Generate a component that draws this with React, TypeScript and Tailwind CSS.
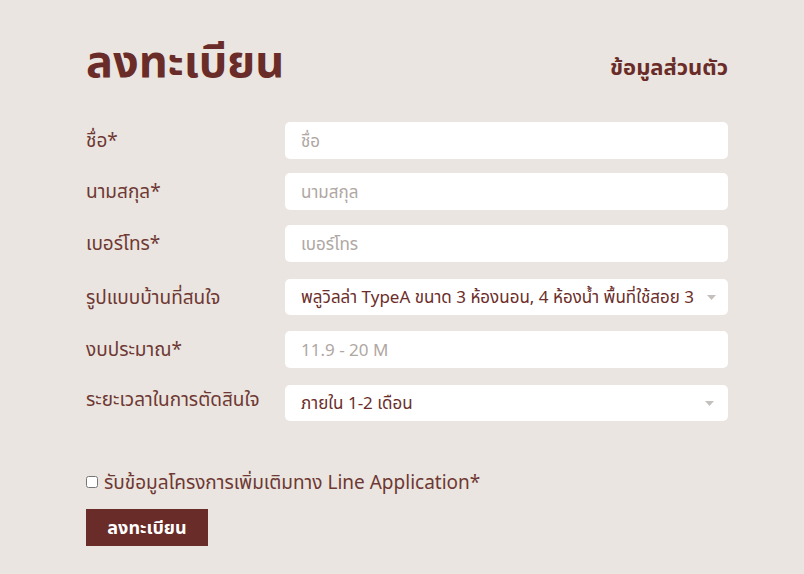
import React, { useState } from 'react';

const fields = [
  { label: 'ชื่อ*', placeholder: 'ชื่อ', mt: 'mt-0' },
  { label: 'นามสกุล*', placeholder: 'นามสกุล', mt: 'mt-[14px]' },
  { label: 'เบอร์โทร*', placeholder: 'เบอร์โทร', mt: 'mt-[15px]' },
];

const Arrow = () => (
  <svg width="9" height="5" viewBox="0 0 9 5" className="shrink-0">
    <path d="M0 0 L9 0 L4.5 5 Z" fill="#c4c0bd" />
  </svg>
);

export default function App() {
  const [agree, setAgree] = useState(false);

  return (
    <div
      className="min-h-[574px] bg-[#eae5e0] text-[#6b2e2a]"
      style={{ fontFamily: '"Noto Sans", "Noto Sans Thai", Tahoma, sans-serif' }}
    >
      <div className="w-[642px] ml-[86px] pt-[26px]">
        {/* Header */}
        <div className="flex items-end justify-between h-[56px]">
          <h1 className="text-[45px] leading-none font-bold text-[#6a2c28]">ลงทะเบียน</h1>
          <span className="text-[22px] font-bold text-[#6a2c28] -mb-[1px]">ข้อมูลส่วนตัว</span>
        </div>

        {/* Fields */}
        <div className="mt-[40px] flex flex-col">
          {fields.map(f => (
            <div key={f.label} className={`flex items-center ${f.mt}`}>
              <label className="w-[199px] text-[19px] text-[#6e3833]">{f.label}</label>
              <input
                placeholder={f.placeholder}
                className="w-[443px] h-[37px] rounded-[5px] bg-white px-[16px] text-[17px] outline-none placeholder:text-[#b0a7a3]"
              />
            </div>
          ))}

          <div className="flex items-center mt-[17px]">
            <label className="w-[199px] text-[19px] text-[#6e3833]">รูปแบบบ้านที่สนใจ</label>
            <div className="w-[443px] h-[36px] rounded-[5px] bg-white pl-[16px] pr-[12px] flex items-center overflow-hidden">
              <span className="text-[17px] text-[#6b2e2a] whitespace-nowrap overflow-hidden flex-1">
                พลูวิลล่า TypeA ขนาด 3 ห้องนอน, 4 ห้องน้ำ พื้นที่ใช้สอย 3
              </span>
              <Arrow />
            </div>
          </div>

          <div className="flex items-center mt-[16px]">
            <label className="w-[199px] text-[19px] text-[#6e3833]">งบประมาณ*</label>
            <input
              placeholder="11.9 - 20 M"
              className="w-[443px] h-[37px] rounded-[5px] bg-white px-[16px] text-[17px] outline-none placeholder:text-[#b0a7a3]"
            />
          </div>

          <div className="flex items-start mt-[17px]">
            <label className="w-[199px] text-[19px] text-[#6e3833]">ระยะเวลาในการตัดสินใจ</label>
            <div className="w-[443px] h-[36px] rounded-[5px] bg-white pl-[16px] pr-[14px] flex items-center justify-between">
              <span className="text-[17px] text-[#6b2e2a]">ภายใน 1-2 เดือน</span>
              <Arrow />
            </div>
          </div>
        </div>

        {/* Consent */}
        <label className="mt-[47px] flex items-center gap-[6px] text-[19px] text-[#6e3833]">
          <input
            type="checkbox"
            checked={agree}
            onChange={e => setAgree(e.target.checked)}
            className="w-[12px] h-[12px] m-0"
          />
          รับข้อมูลโครงการเพิ่มเติมทาง Line Application*
        </label>

        <button className="mt-[12px] w-[122px] h-[37px] bg-[#6a2c28] text-white text-[18px] font-bold">
          ลงทะเบียน
        </button>
      </div>
    </div>
  );
}
